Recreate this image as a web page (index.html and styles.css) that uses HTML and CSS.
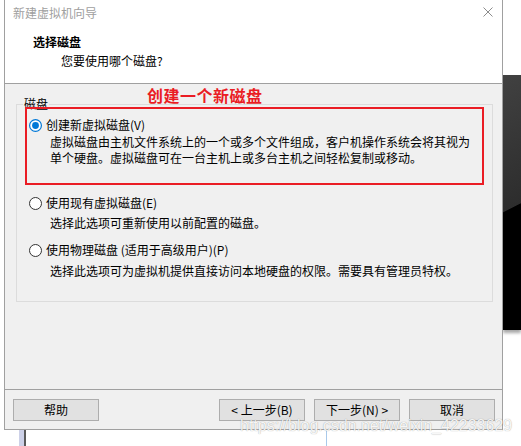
FILE: index.html
```html
<!DOCTYPE html>
<html lang="zh-CN">
<head>
<meta charset="utf-8">
<title>新建虚拟机向导</title>
<link rel="stylesheet" href="styles.css">
</head>
<body>
<div class="desktop">
  <div class="col">
    <div class="window">
      <div class="titlebar">
        <span class="title">新建虚拟机向导</span>
        <svg class="close" viewBox="0 0 10 10" width="10" height="10"><path d="M0.5 0.5L9.5 9.5M9.5 0.5L0.5 9.5" stroke="#8c8c8c" stroke-width="1" fill="none"/></svg>
      </div>
      <div class="header">
        <div class="h-title">选择磁盘</div>
        <div class="h-sub">您要使用哪个磁盘?</div>
      </div>
      <div class="body">
        <div class="group">
          <div class="group-label">磁盘</div>
          <div class="option-row row1">
            <svg class="radio" viewBox="0 0 13 13" width="13" height="13"><circle cx="6.5" cy="6.5" r="5.9" fill="#fff" stroke="#0078d7" stroke-width="1.2"/><circle cx="6.5" cy="6.5" r="3.4" fill="#0078d7"/></svg>
            <span>创建新虚拟磁盘(V)</span>
          </div>
          <div class="desc desc1">虚拟磁盘由主机文件系统上的一个或多个文件组成，客户机操作系统会将其视为<br>单个硬盘。虚拟磁盘可在一台主机上或多台主机之间轻松复制或移动。</div>
          <div class="option-row row2">
            <svg class="radio" viewBox="0 0 13 13" width="13" height="13"><circle cx="6.5" cy="6.5" r="6" fill="#fff" stroke="#333" stroke-width="1"/></svg>
            <span>使用现有虚拟磁盘(E)</span>
          </div>
          <div class="desc desc2">选择此选项可重新使用以前配置的磁盘。</div>
          <div class="option-row row3">
            <svg class="radio" viewBox="0 0 13 13" width="13" height="13"><circle cx="6.5" cy="6.5" r="6" fill="#fff" stroke="#333" stroke-width="1"/></svg>
            <span>使用物理磁盘 (适用于高级用户)(P)</span>
          </div>
          <div class="desc desc3">选择此选项可为虚拟机提供直接访问本地硬盘的权限。需要具有管理员特权。</div>
        </div>
      </div>
      <div class="footer">
        <button class="btn">帮助</button>
        <div class="nav">
          <button class="btn">&lt; 上一步(B)</button>
          <button class="btn">下一步(N) &gt;</button>
          <button class="btn">取消</button>
        </div>
      </div>
      <div class="annot-box"></div>
      <div class="annot-text">创建一个新磁盘</div>
    </div>
    <div class="below">
      <span class="bar"></span>
      <span class="vline"></span>
    </div>
  </div>
  <div class="bgapp"></div>
  <div class="watermark">https://blog.csdn.net/weixin_42233629</div>
</div>
</body>
</html>
```
FILE: styles.css
```css
* { box-sizing: border-box; }
body {
  margin: 0;
  background: #fff;
  font-family: "Noto Sans CJK SC", "Microsoft YaHei", sans-serif;
  font-size: 12px;
  color: #000;
}
.desktop {
  position: relative;
  display: flex;
  align-items: flex-start;
  width: 521px;
  height: 446px;
  overflow: hidden;
}
.col {
  flex: none;
  width: 499px;
  margin-left: 4px;
}
.window {
  position: relative;
  width: 499px;
  background: #f0f0f0;
  border-left: 1px solid #a0a0a0;
  border-right: 1px solid #a0a0a0;
  border-bottom: 1px solid #a0a0a0;
}
.titlebar {
  height: 26px;
  background: #fff;
  display: flex;
  align-items: center;
  justify-content: space-between;
  padding: 0 9px 0 8px;
}
.title {
  color: #a0a0a0;
  line-height: 16px;
}
.close {
  display: block;
  margin-bottom: 2px;
}
.header {
  height: 58px;
  background: #fff;
  border-bottom: 1px solid #a0a0a0;
  padding: 8px 0 0 28px;
}
.h-title {
  font-weight: bold;
  line-height: 16px;
}
.h-sub {
  line-height: 16px;
  margin: 3px 0 0 28px;
}
.body {
  height: 305px;
  padding-top: 20px;
}
.group {
  margin: 0 9px 0 11px;
  border: 1px solid #dcdcdc;
  padding-bottom: 22px;
}
.group-label {
  width: fit-content;
  margin: -9px 0 0 6px;
  padding: 0 1px;
  background: #f0f0f0;
  line-height: 16px;
}
.option-row {
  display: flex;
  align-items: center;
  gap: 4px;
  margin-left: 12px;
  line-height: 16px;
}
.radio { display: block; flex: none; }
.row1 { margin-top: 5px; }
.row2 { margin-top: 29px; }
.row3 { margin-top: 11px; }
.desc {
  margin-left: 33px;
  line-height: 16px;
  white-space: nowrap;
}
.desc1 { margin-top: 1px; }
.desc2 { margin-top: 4px; }
.desc3 { margin-top: 5px; }
.footer {
  height: 40px;
  border-top: 1px solid #a0a0a0;
  padding: 9px 7px 0 8px;
  display: flex;
  justify-content: space-between;
  align-items: flex-start;
}
.nav {
  display: flex;
  gap: 9px;
}
.btn {
  width: 86px;
  height: 22px;
  margin: 0;
  padding: 0;
  background: #e1e1e1;
  border: 1px solid #adadad;
  font-family: "Noto Sans CJK SC", "Microsoft YaHei", sans-serif;
  font-size: 12px;
  line-height: 20px;
  color: #000;
  text-align: center;
}
.annot-box {
  position: absolute;
  left: 20px;
  top: 107px;
  width: 459px;
  height: 78px;
  border: 2px solid #ea1c24;
}
.annot-text {
  position: absolute;
  left: 142px;
  top: 85px;
  font-size: 16px;
  font-weight: bold;
  line-height: 20px;
  letter-spacing: 0.5px;
  color: #ea1c24;
}
.below {
  display: flex;
  height: 16px;
}
.bar {
  width: 7px;
  height: 16px;
  margin-left: 15px;
  background: #cdd1e8;
  border-right: 2px solid #5a5a5a;
}
.vline {
  width: 1px;
  height: 16px;
  margin-left: 300px;
  background: #a9c9ea;
}
.bgapp {
  flex: none;
  width: 18px;
  height: 255px;
  margin-top: 75px;
  background: linear-gradient(153deg, #414141 0%, #2d2d2d 51.8%, #000 52.2%, #000 100%);
  box-shadow: 0 3px 3px rgba(0, 0, 0, 0.35);
}
.watermark {
  position: absolute;
  left: 240px;
  top: 418px;
  font-family: "Liberation Sans", Arial, sans-serif;
  font-size: 16px;
  line-height: 16px;
  color: rgba(255, 255, 255, 0.92);
  text-shadow: 0 0 1px rgba(0, 0, 0, 0.4);
  white-space: nowrap;
}
```
